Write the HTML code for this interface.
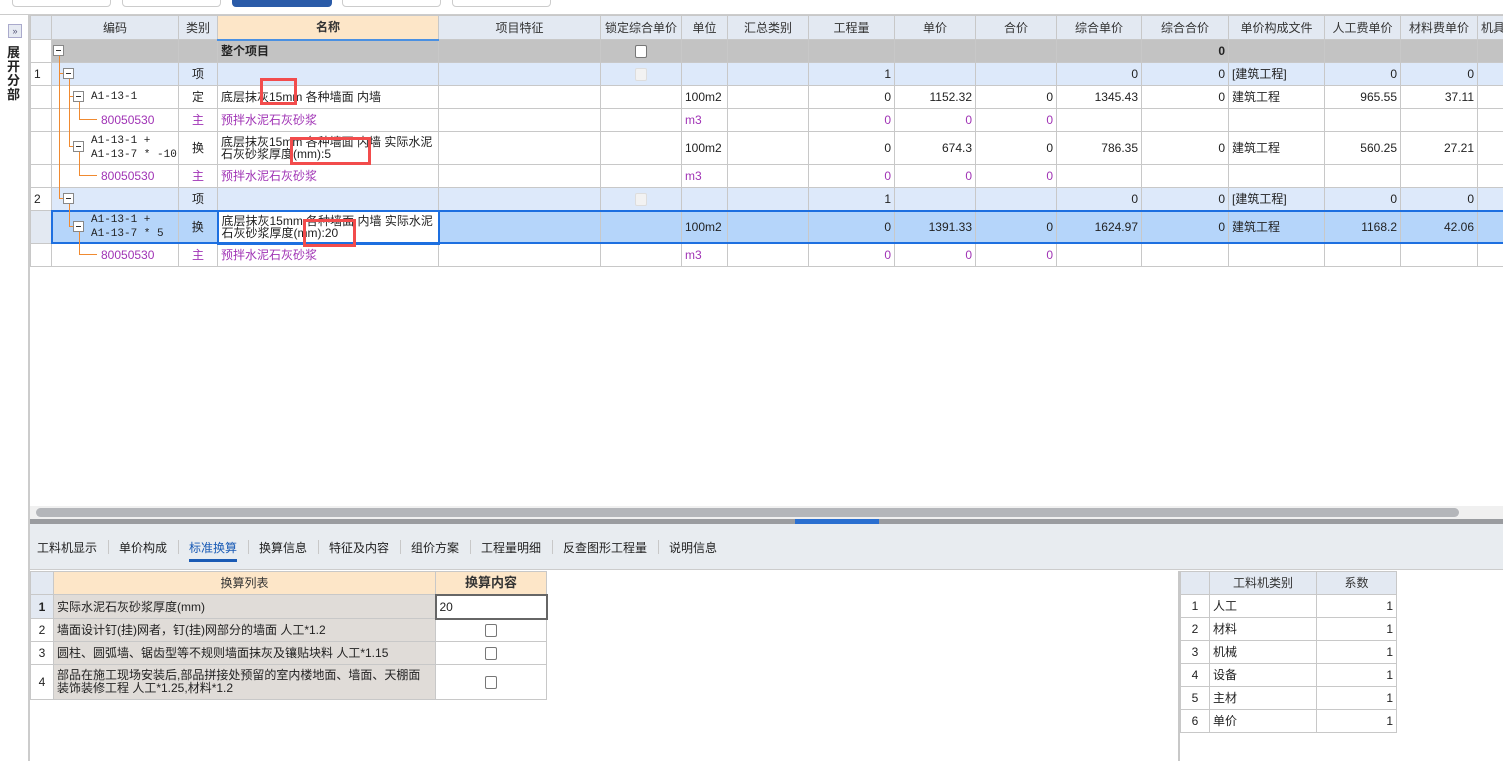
<!DOCTYPE html>
<html><head><meta charset="utf-8"><style>
*{box-sizing:border-box;margin:0;padding:0}
body{width:1503px;height:761px;position:relative;overflow:hidden;background:#fff;font-family:"Liberation Sans","Noto Sans CJK SC",sans-serif;font-size:12px;color:#222}
.abs{position:absolute}
table{border-collapse:collapse;table-layout:fixed;position:absolute}
td{border:1px solid #c8c8c8;padding:0 3px;white-space:nowrap;overflow:hidden;line-height:12px}
.r{text-align:right}.c{text-align:center}
.h td{background:#e3e9f2;text-align:center;color:#333}
.g td{background:#c3c3c3;font-weight:bold}
.b td{background:#dde9fa}
.s td{background:#b5d5fa}
.p{color:#a033b5}
.code{font-family:"Liberation Mono","Noto Sans CJK SC",monospace;font-size:11px;padding-left:39px}
.sub{padding-left:49px}
.btn{position:absolute;top:-6px;height:13px;border:1px solid #ccc;border-radius:4px;background:#fff}
.box{position:absolute;width:11px;height:11px;border:1px solid #888;background:#fff}
.box:after{content:"";position:absolute;left:2px;top:4px;width:5px;height:1px;background:#333}
.ov{position:absolute;background:#f08a30}
.red{position:absolute;border:3px solid #f24c4c}
.chk{display:inline-block;width:12px;height:13px;border:1px solid #777;border-radius:2px;background:#fff;vertical-align:middle}
.tab{position:absolute;top:539px;font-size:12px;color:#222;white-space:nowrap}
.sep{position:absolute;top:540px;width:1px;height:14px;background:#c8c8c8}
</style></head><body>
<div class="btn" style="left:12px;width:99px"></div>
<div class="btn" style="left:122px;width:99px"></div>
<div class="btn" style="left:232px;width:100px;background:#2a5ba8;border-color:#2a5ba8"></div>
<div class="btn" style="left:342px;width:99px"></div>
<div class="btn" style="left:452px;width:99px"></div>
<div class="abs" style="left:0;top:14px;width:1503px;height:1px;background:#ccc"></div>
<div class="abs" style="left:28px;top:15px;width:2px;height:746px;background:#ccc"></div>
<div class="abs" style="left:8px;top:24px;width:14px;height:14px;border:1px solid #aac;background:#e6eaf2;font-size:9px;color:#557;text-align:center;line-height:12px">»</div>
<div class="abs" style="left:7px;top:46px;width:14px;font-weight:bold;font-size:13px;line-height:14px">展开分部</div>

<table style="left:30px;top:15px;width:1473px">
<colgroup><col style="width:21px"><col style="width:127px"><col style="width:39px"><col style="width:221px"><col style="width:162px"><col style="width:81px"><col style="width:46px"><col style="width:81px"><col style="width:86px"><col style="width:81px"><col style="width:81px"><col style="width:85px"><col style="width:87px"><col style="width:96px"><col style="width:76px"><col style="width:77px"><col style="width:26px"></colgroup>
<tr class="h" style="height:24px"><td></td><td>编码</td><td>类别</td><td style="background:#fde6c8;font-weight:bold;border-bottom:2px solid #4a90e2">名称</td><td>项目特征</td><td>锁定综合单价</td><td>单位</td><td>汇总类别</td><td>工程量</td><td>单价</td><td>合价</td><td>综合单价</td><td>综合合价</td><td>单价构成文件</td><td>人工费单价</td><td>材料费单价</td><td>机具</td></tr>
<tr class="g" style="height:23px"><td style="background:#fff"></td><td></td><td></td><td>整个项目</td><td></td><td class="c"><span class="chk"></span></td><td></td><td></td><td></td><td></td><td></td><td></td><td class="r">0</td><td></td><td></td><td></td><td></td></tr>
<tr class="b" style="height:23px"><td style="background:#fff">1</td><td></td><td class="c">项</td><td></td><td></td><td class="c"><span class="chk" style="border-color:#ddd;background:#f2f2f2"></span></td><td></td><td></td><td class="r">1</td><td></td><td></td><td class="r">0</td><td class="r">0</td><td>[建筑工程]</td><td class="r">0</td><td class="r">0</td><td></td></tr>
<tr style="height:23px"><td></td><td class="code">A1-13-1</td><td class="c">定</td><td>底层抹灰15mm 各种墙面 内墙</td><td></td><td></td><td>100m2</td><td></td><td class="r">0</td><td class="r">1152.32</td><td class="r">0</td><td class="r">1345.43</td><td class="r">0</td><td>建筑工程</td><td class="r">965.55</td><td class="r">37.11</td><td></td></tr>
<tr style="height:23px"><td></td><td class="p sub">80050530</td><td class="c p">主</td><td class="p">预拌水泥石灰砂浆</td><td></td><td></td><td class="p">m3</td><td></td><td class="r p">0</td><td class="r p">0</td><td class="r p">0</td><td></td><td></td><td></td><td></td><td></td><td></td></tr>
<tr style="height:33px"><td></td><td class="code" style="line-height:14px">A1-13-1 +<br>A1-13-7 * -10</td><td class="c">换</td><td>底层抹灰15mm 各种墙面 内墙  实际水泥<br>石灰砂浆厚度(mm):5</td><td></td><td></td><td>100m2</td><td></td><td class="r">0</td><td class="r">674.3</td><td class="r">0</td><td class="r">786.35</td><td class="r">0</td><td>建筑工程</td><td class="r">560.25</td><td class="r">27.21</td><td></td></tr>
<tr style="height:23px"><td></td><td class="p sub">80050530</td><td class="c p">主</td><td class="p">预拌水泥石灰砂浆</td><td></td><td></td><td class="p">m3</td><td></td><td class="r p">0</td><td class="r p">0</td><td class="r p">0</td><td></td><td></td><td></td><td></td><td></td><td></td></tr>
<tr class="b" style="height:23px"><td style="background:#fff">2</td><td></td><td class="c">项</td><td></td><td></td><td class="c"><span class="chk" style="border-color:#ddd;background:#f2f2f2"></span></td><td></td><td></td><td class="r">1</td><td></td><td></td><td class="r">0</td><td class="r">0</td><td>[建筑工程]</td><td class="r">0</td><td class="r">0</td><td></td></tr>
<tr class="s" style="height:33px"><td style="background:#e3e9f2"></td><td class="code" style="line-height:14px">A1-13-1 +<br>A1-13-7 * 5</td><td class="c">换</td><td style="background:#fff;border:2px solid #1d6fe0">底层抹灰15mm 各种墙面 内墙  实际水泥<br>石灰砂浆厚度(mm):20</td><td></td><td></td><td>100m2</td><td></td><td class="r">0</td><td class="r">1391.33</td><td class="r">0</td><td class="r">1624.97</td><td class="r">0</td><td>建筑工程</td><td class="r">1168.2</td><td class="r">42.06</td><td></td></tr>
<tr style="height:23px"><td></td><td class="p sub">80050530</td><td class="c p">主</td><td class="p">预拌水泥石灰砂浆</td><td></td><td></td><td class="p">m3</td><td></td><td class="r p">0</td><td class="r p">0</td><td class="r p">0</td><td></td><td></td><td></td><td></td><td></td><td></td></tr>
</table>
<div class="abs" style="left:51px;top:210px;width:1452px;height:34px;border-top:2px solid #1d6fe0;border-bottom:2px solid #1d6fe0;border-left:2px solid #1d6fe0"></div>
<!-- tree lines -->
<div class="ov" style="left:59px;top:56px;width:1px;height:143px"></div>
<div class="ov" style="left:59px;top:73px;width:5px;height:1px"></div>
<div class="ov" style="left:59px;top:198px;width:5px;height:1px"></div>
<div class="ov" style="left:69px;top:79px;width:1px;height:68px"></div>
<div class="ov" style="left:69px;top:96px;width:4px;height:1px"></div>
<div class="ov" style="left:69px;top:146px;width:4px;height:1px"></div>
<div class="ov" style="left:69px;top:204px;width:1px;height:22px"></div>
<div class="ov" style="left:69px;top:226px;width:4px;height:1px"></div>
<div class="ov" style="left:79px;top:102px;width:1px;height:17px"></div>
<div class="ov" style="left:79px;top:119px;width:18px;height:1px"></div>
<div class="ov" style="left:79px;top:152px;width:1px;height:23px"></div>
<div class="ov" style="left:79px;top:175px;width:18px;height:1px"></div>
<div class="ov" style="left:79px;top:232px;width:1px;height:22px"></div>
<div class="ov" style="left:79px;top:254px;width:18px;height:1px"></div>
<div class="box" style="left:53px;top:45px"></div>
<div class="box" style="left:63px;top:68px"></div>
<div class="box" style="left:73px;top:91px"></div>
<div class="box" style="left:73px;top:141px"></div>
<div class="box" style="left:63px;top:193px"></div>
<div class="box" style="left:73px;top:221px"></div>
<div class="red" style="left:260px;top:78px;width:37px;height:27px"></div>
<div class="red" style="left:290px;top:137px;width:81px;height:28px"></div>
<div class="red" style="left:303px;top:219px;width:53px;height:28px"></div>

<!-- scrollbar -->
<div class="abs" style="left:30px;top:506px;width:1473px;height:13px;background:#f0f0f0"></div>
<div class="abs" style="left:36px;top:508px;width:1423px;height:9px;border-radius:5px;background:#b4b6ba"></div>
<div class="abs" style="left:30px;top:519px;width:1473px;height:5px;background:#9a9ca0"></div>
<div class="abs" style="left:795px;top:519px;width:84px;height:5px;background:#2a6fd0"></div>
<div class="abs" style="left:30px;top:524px;width:1473px;height:46px;background:#e8ecf0;border-bottom:1px solid #ccc"></div>
<div class="tab" style="left:37px">工料机显示</div><div class="sep" style="left:108px"></div>
<div class="tab" style="left:119px">单价构成</div><div class="sep" style="left:178px"></div>
<div class="tab" style="left:189px;color:#1a5bb5;border-bottom:3px solid #1a5bb5;padding-bottom:3px">标准换算</div><div class="sep" style="left:248px"></div>
<div class="tab" style="left:259px">换算信息</div><div class="sep" style="left:318px"></div>
<div class="tab" style="left:329px">特征及内容</div><div class="sep" style="left:400px"></div>
<div class="tab" style="left:411px">组价方案</div><div class="sep" style="left:470px"></div>
<div class="tab" style="left:481px">工程量明细</div><div class="sep" style="left:552px"></div>
<div class="tab" style="left:563px">反查图形工程量</div><div class="sep" style="left:658px"></div>
<div class="tab" style="left:669px">说明信息</div>

<table style="left:30px;top:571px;width:516px">
<colgroup><col style="width:23px"><col style="width:382px"><col style="width:111px"></colgroup>
<tr class="h" style="height:23px"><td></td><td style="background:#fde6c8">换算列表</td><td style="background:#fde6c8;font-weight:bold;font-size:13px">换算内容</td></tr>
<tr style="height:24px"><td class="c" style="background:#e3e9f2;font-weight:bold">1</td><td style="background:#e0dcd8">实际水泥石灰砂浆厚度(mm)</td><td style="border:2px solid #666">20</td></tr>
<tr style="height:23px"><td class="c">2</td><td style="background:#e0dcd8">墙面设计钉(挂)网者，钉(挂)网部分的墙面 人工*1.2</td><td class="c"><span class="chk"></span></td></tr>
<tr style="height:23px"><td class="c">3</td><td style="background:#e0dcd8">圆柱、圆弧墙、锯齿型等不规则墙面抹灰及镶贴块料 人工*1.15</td><td class="c"><span class="chk"></span></td></tr>
<tr style="height:35px"><td class="c">4</td><td style="background:#e0dcd8;line-height:13px">部品在施工现场安装后,部品拼接处预留的室内楼地面、墙面、天棚面<br>装饰装修工程 人工*1.25,材料*1.2</td><td class="c"><span class="chk"></span></td></tr>
</table>
<div class="abs" style="left:1178px;top:571px;width:2px;height:190px;background:#c8c8c8"></div>
<table style="left:1180px;top:571px;width:216px">
<colgroup><col style="width:29px"><col style="width:107px"><col style="width:80px"></colgroup>
<tr class="h" style="height:23px"><td></td><td>工料机类别</td><td>系数</td></tr>
<tr style="height:23px"><td class="c">1</td><td>人工</td><td class="r">1</td></tr>
<tr style="height:23px"><td class="c">2</td><td>材料</td><td class="r">1</td></tr>
<tr style="height:23px"><td class="c">3</td><td>机械</td><td class="r">1</td></tr>
<tr style="height:23px"><td class="c">4</td><td>设备</td><td class="r">1</td></tr>
<tr style="height:23px"><td class="c">5</td><td>主材</td><td class="r">1</td></tr>
<tr style="height:23px"><td class="c">6</td><td>单价</td><td class="r">1</td></tr>
</table>
</body></html>
